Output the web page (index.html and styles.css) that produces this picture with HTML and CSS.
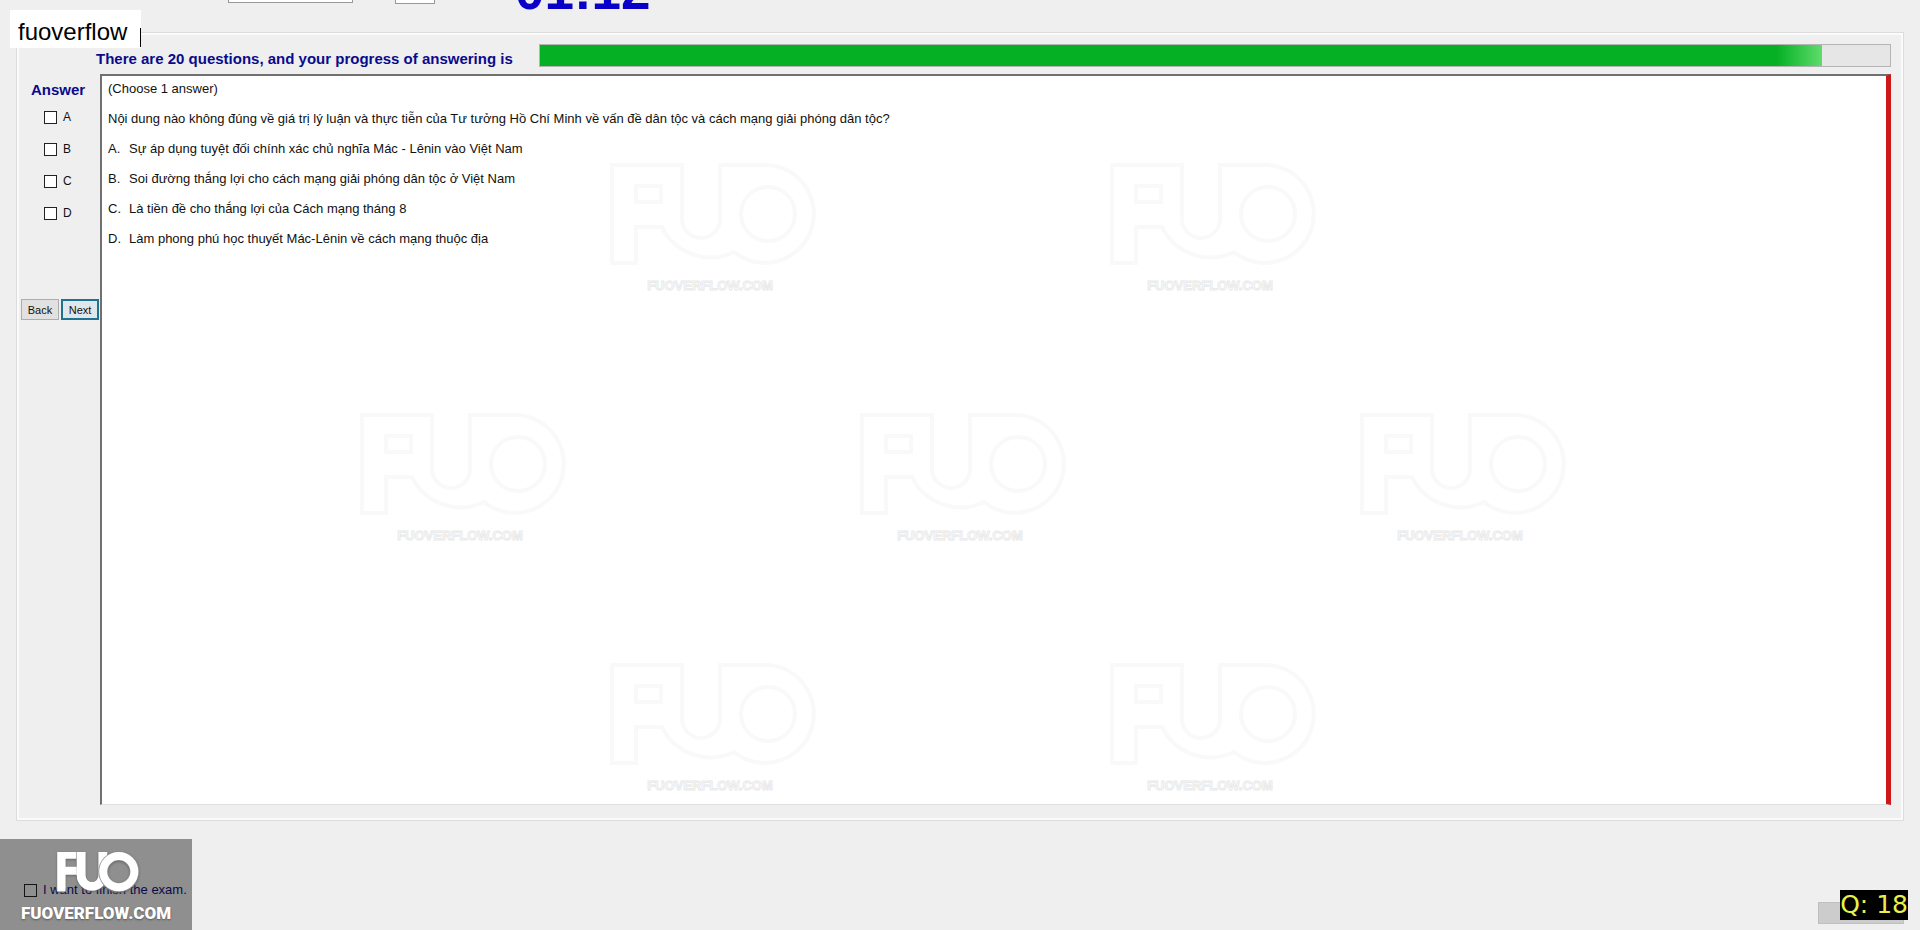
FILE: index.html
```html
<!DOCTYPE html>
<html lang="vi">
<head>
<meta charset="utf-8">
<title>FUOverflow exam</title>
<link rel="stylesheet" href="styles.css">
</head>
<body>
<svg class="defs" aria-hidden="true">
  <symbol id="mark" viewBox="0 0 210 140">
    <g class="mark-shape">
      <path d="M4 4H74V58A19 19 0 0 0 112 58V4H160A49 49 0 1 1 126 91A54 54 0 0 1 54 66H28V102H4ZM28 25V41H53V25Z"/>
      <circle cx="160" cy="53" r="27"/>
    </g>
    <text class="mark-text" x="102" y="129" text-anchor="middle">FUOVERFLOW.COM</text>
  </symbol>
</svg>

<header class="topbar">
  <select class="font-select" aria-label="Font"></select>
  <select class="size-select" aria-label="Size"></select>
  <div class="clock">01:12</div>
</header>

<main class="group">
  <div class="progress-row">
    <span class="heading" id="progress-label">There are 20 questions, and your progress of answering is</span>
    <div class="progress" role="progressbar" aria-labelledby="progress-label" aria-valuenow="95"><div class="progress-fill" style="width:95%"></div></div>
  </div>
  <div class="work">
    <aside class="answers">
      <h2 class="heading">Answer</h2>
      <label class="choice"><input type="checkbox" class="box">A</label>
      <label class="choice"><input type="checkbox" class="box">B</label>
      <label class="choice"><input type="checkbox" class="box">C</label>
      <label class="choice"><input type="checkbox" class="box">D</label>
      <div class="nav">
        <button class="btn">Back</button>
        <button class="btn btn-focus">Next</button>
      </div>
    </aside>
    <section class="question">
      <div class="marks" aria-hidden="true">
        <div class="marks-row"><svg class="mark"><use href="#mark"/></svg><svg class="mark"><use href="#mark"/></svg></div>
        <div class="marks-row marks-wide"><svg class="mark"><use href="#mark"/></svg><svg class="mark"><use href="#mark"/></svg><svg class="mark"><use href="#mark"/></svg></div>
        <div class="marks-row"><svg class="mark"><use href="#mark"/></svg><svg class="mark"><use href="#mark"/></svg></div>
      </div>
      <p class="line">(Choose 1 answer)</p>
      <p class="line">Nội dung nào không đúng về giá trị lý luận và thực tiễn của Tư tưởng Hồ Chí Minh về vấn đề dân tộc và cách mạng giải phóng dân tộc?</p>
      <p class="line option"><span>A.</span><span>Sự áp dụng tuyệt đối chính xác chủ nghĩa Mác - Lênin vào Việt Nam</span></p>
      <p class="line option"><span>B.</span><span>Soi đường thắng lợi cho cách mạng giải phóng dân tộc ở Việt Nam</span></p>
      <p class="line option"><span>C.</span><span>Là tiền đề cho thắng lợi của Cách mạng tháng 8</span></p>
      <p class="line option"><span>D.</span><span>Làm phong phú học thuyết Mác-Lênin về cách mạng thuộc địa</span></p>
    </section>
  </div>
</main>

<footer class="bottom">
  <label class="finish"><input type="checkbox" class="box box-clear">I want to finish the exam.</label>
  <button class="exit" aria-label="Exit"></button>
</footer>

<div class="name-tag">fuoverflow</div>
<div class="badge">
  <svg class="badge-logo" viewBox="0 0 204 100" role="img" aria-label="FUO">
    <path d="M0 0H48V17H21V37H50V57H21V99H0Z" fill="#fff"/>
    <path d="M60 0V59A27 27 0 0 0 114 59V0" fill="none" stroke="#fff" stroke-width="22"/>
    <path d="M48 0V60" stroke="#b5b5b5" stroke-width="1"/>
    <circle cx="154" cy="49" r="39" fill="none" stroke="#8f8f8f" stroke-width="24"/>
    <circle cx="154" cy="49" r="39" fill="none" stroke="#fff" stroke-width="20"/>
  </svg>
  <span class="badge-text">FUOVERFLOW.COM</span>
</div>
<div class="counter">Q: 18</div>
</body>
</html>
```
FILE: styles.css
```css
* { box-sizing: border-box; }

body {
  margin: 0;
  min-height: 100vh;
  display: flex;
  flex-direction: column;
  position: relative;
  background: #efefef;
  color: #111;
  font: 13px/16px "Liberation Sans", sans-serif;
}

.defs { position: absolute; width: 0; height: 0; }

.topbar {
  height: 32px;
  overflow: hidden;
  display: flex;
  align-items: flex-start;
  padding-left: 228px;
}

.font-select, .size-select {
  height: 24px;
  margin-top: -21px;
  border: 1px solid #999;
  background: #fff;
}
.font-select { width: 125px; }
.size-select { width: 40px; margin-left: 42px; margin-top: -20px; }

.clock {
  margin: -37px 0 0 80px;
  color: #0a00c8;
  font-size: 53px;
  line-height: 56px;
  font-weight: bold;
}

.group {
  flex: 1;
  display: flex;
  flex-direction: column;
  margin: 0 16px;
  padding: 10px 12px 15px 1px;
  border: 1px solid #dcdcdc;
  box-shadow: inset 0 0 0 2px #fbfbfb;
}

.heading {
  margin: 0;
  color: #0a0a8c;
  font-size: 15px;
  line-height: 18px;
  font-weight: bold;
}

.progress-row {
  display: flex;
  align-items: center;
  gap: 26px;
  height: 24px;
  padding: 0 0 0 78px;
}
.progress-row .heading { padding-top: 7px; }

.progress {
  flex: 1;
  height: 23px;
  border: 1px solid #b4b4b4;
  background: #e6e6e6;
}
.progress-fill {
  height: 100%;
  background: linear-gradient(to left, #5fdc6c, #06b025 45px);
}

.work { flex: 1; display: flex; margin-top: 7px; }

.answers {
  width: 82px;
  display: flex;
  flex-direction: column;
  padding-top: 7px;
}
.answers .heading { padding-left: 13px; margin-bottom: 10px; }

.choice {
  display: flex;
  align-items: center;
  gap: 6px;
  height: 16px;
  margin: 0 0 16px 26px;
  font-size: 12px;
}

.box {
  appearance: none;
  width: 13px;
  height: 13px;
  margin: 0;
  border: 1px solid #222;
  background: #fff;
}
.box-clear { background: transparent; }

.nav { display: flex; gap: 2px; margin-top: 62px; padding-left: 3px; }
.btn {
  width: 38px;
  height: 21px;
  padding: 0;
  border: 1px solid #adadad;
  background: #e1e1e1;
  color: #111;
  font: 11px "Liberation Sans", sans-serif;
}
.btn-focus { border: 2px solid #1d7390; background: #dfe6ec; }

.question {
  flex: 1;
  position: relative;
  padding: 5px 6px;
  border-top: 2px solid #707070;
  border-left: 2px solid #707070;
  border-bottom: 1px solid #dedede;
  border-right: 5px solid #cc1818;
  background: #fff;
}

.line { position: relative; margin: 0 0 14px; }
.option { display: flex; }
.option span:first-child { width: 21px; }

.marks {
  position: absolute;
  inset: 85px 0 0 0;
  display: flex;
  flex-direction: column;
  gap: 110px;
}
.marks-row { display: flex; gap: 290px; padding-left: 506px; }
.marks-wide { padding-left: 256px; }
.mark { width: 210px; height: 140px; flex: none; }
.mark-shape { fill: none; stroke: #f9f9f9; stroke-width: 4; }
.mark-text {
  fill: #fff;
  stroke: #e9e9e9;
  stroke-width: 1;
  font: bold 13px "Liberation Sans", sans-serif;
}

.bottom {
  height: 109px;
  display: flex;
  justify-content: space-between;
  padding: 0 16px 0 24px;
}
.finish {
  display: flex;
  align-items: center;
  gap: 6px;
  height: 16px;
  margin-top: 61px;
  color: #10107a;
}
.exit {
  width: 86px;
  height: 22px;
  margin-top: 81px;
  border: 1px solid #bfbfbf;
  background: #ccc;
}

.name-tag {
  position: absolute;
  left: 10px;
  top: 10px;
  padding: 10px 14px 4px 8px;
  background: #fff;
  color: #000;
  font-size: 24px;
  line-height: 24px;
}
.name-tag::after {
  content: "";
  position: absolute;
  right: 0;
  bottom: 1px;
  width: 1px;
  height: 19px;
  background: #000;
}

.badge {
  position: absolute;
  left: 0;
  bottom: 0;
  width: 192px;
  height: 91px;
  display: flex;
  flex-direction: column;
  align-items: center;
  padding-top: 13px;
  background: rgba(0, 0, 0, .4);
}
.badge-logo { width: 82px; height: 40px; margin-left: 4px; filter: drop-shadow(0 1px 1px #666); }
.badge-text {
  margin-top: 9px;
  color: #fff;
  font: 900 17px/24px Roboto, "Liberation Sans", sans-serif;
  text-shadow: 0 1px 2px #555;
}

.counter {
  position: absolute;
  right: 12px;
  bottom: 10px;
  background: #000;
  color: #e8f04a;
  font: 25px/30px "DejaVu Sans", sans-serif;
}
```
